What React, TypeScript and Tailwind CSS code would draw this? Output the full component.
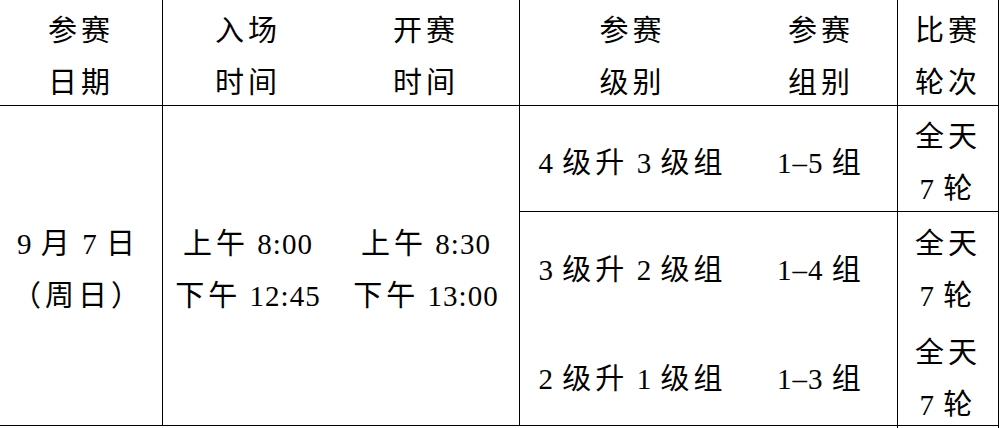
import React from 'react';

// CJK glyphs sit on a wider grid than the Latin digits
const Txt = ({ s }: { s: string }) => (
  <>
    {Array.from(s).map((ch, i) =>
      /[\u2e80-\uffef]/.test(ch) ? (
        <span key={i} className="tracking-[4px]">
          {ch}
        </span>
      ) : (
        <span key={i} className="tracking-[1px]">
          {ch}
        </span>
      )
    )}
  </>
);

const Lines = ({ lines, className = '' }: { lines: string[]; className?: string }) => (
  <div className={`flex flex-col items-center justify-center ${className}`}>
    {lines.map((l, i) => (
      <div key={i} className="whitespace-pre leading-[52px]">
        <Txt s={l} />
      </div>
    ))}
  </div>
);

const groups = [
  { level: '4 级升 3 级组', group: '1–5 组' },
  { level: '3 级升 2 级组', group: '1–4 组' },
  { level: '2 级升 1 级组', group: '1–3 组' },
];

export default function App() {
  return (
    <div
      className="w-[1000px] h-[428px] bg-white text-black text-[29px] overflow-hidden"
      style={{ fontFamily: '"Liberation Serif", "Noto Sans CJK SC", serif' }}
    >
      <div className="w-[999px]">
        {/* Header */}
        <div className="flex h-[106px] border-b border-black">
          <Lines lines={['参赛', '日期']} className="w-[163px] border-r border-black pt-[8px]" />
          <div className="flex w-[357px] border-r border-black">
            <Lines lines={['入场', '时间']} className="w-[170px] pt-[8px]" />
            <Lines lines={['开赛', '时间']} className="flex-1 pt-[8px]" />
          </div>
          <div className="flex w-[378px] border-r border-black">
            <Lines lines={['参赛', '级别']} className="w-[225px] pt-[8px]" />
            <Lines lines={['参赛', '组别']} className="flex-1 pt-[8px]" />
          </div>
          <Lines lines={['比赛', '轮次']} className="w-[101px] border-r border-black pt-[8px]" />
        </div>

        {/* Body */}
        <div className="flex h-[320px] border-b border-black">
          <Lines lines={['9 月 7 日', '（周日）']} className="w-[163px] border-r border-black pt-[8px] pr-[6px]" />
          <div className="flex w-[357px] border-r border-black">
            <Lines lines={['上午 8:00', '下午 12:45']} className="w-[170px] pt-[8px]" />
            <Lines lines={['上午 8:30', '下午 13:00']} className="flex-1 pt-[8px]" />
          </div>
          <div className="flex flex-col w-[479px]">
            {groups.map((g, i) => (
              <div
                key={i}
                className={`flex ${i === 0 ? 'h-[106px] border-b border-black' : i === 1 ? 'h-[107px]' : 'flex-1'}`}
              >
                <div className="flex w-[378px] border-r border-black">
                  <Lines lines={[g.level]} className="w-[225px] pt-[8px]" />
                  <Lines lines={[g.group]} className="flex-1 pt-[8px]" />
                </div>
                <Lines lines={['全天', '7 轮']} className="w-[101px] border-r border-black pt-[8px]" />
              </div>
            ))}
          </div>
        </div>
      </div>
    </div>
  );
}
